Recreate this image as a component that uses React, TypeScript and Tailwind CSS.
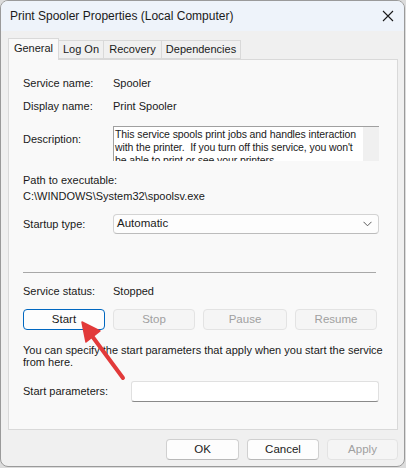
import React from 'react';

const labelCls = 'w-[90px] shrink-0';

function Btn({ children, primary, disabled, w }: { children: React.ReactNode; primary?: boolean; disabled?: boolean; w: string }) {
  const base = 'h-[21px] flex items-center justify-center rounded-[4px] border text-[11.5px] ' + w;
  if (primary) return <div className={base + ' border-[#0067c0] bg-[#fdfdfd] text-[#1a1a1a]'}>{children}</div>;
  if (disabled) return <div className={base + ' border-[#e3e3e3] bg-[#f5f5f5] text-[#a0a0a0]'}>{children}</div>;
  return <div className={base + ' border-[#d0d0d0] border-b-[#b8b8b8] bg-[#fdfdfd] text-[#1a1a1a]'}>{children}</div>;
}

export default function App() {
  return (
    <div className="w-[406px] h-[468px] bg-[#dcdcdc] font-['Liberation_Sans',Arial,sans-serif] text-[11px] text-[#1a1a1a] relative">
      <div className="w-[405px] h-[467px] rounded-[8px] border border-[#9a9a9a] bg-[#f0f0f0] overflow-hidden flex flex-col">
        {/* title bar */}
        <div className="h-[30px] bg-[#eef3fa] flex items-center justify-between pl-[9px] pr-[9px]">
          <span className="text-[12px] text-[#1a1a1a]">Print Spooler Properties (Local Computer)</span>
          <svg width="12" height="12" viewBox="0 0 12 12" className="mr-[1px]">
            <path d="M1 1L11 11M11 1L1 11" stroke="#1a1a1a" strokeWidth="1.1" fill="none" />
          </svg>
        </div>

        <div className="px-[7px] pt-[6px]">
          {/* tabs */}
          <div className="flex items-end h-[22px] text-[11px]">
            <div className="h-[22px] w-[51px] border border-b-0 border-[#d9d9d9] bg-[#f9f9f9] flex items-center justify-center relative top-[1px] z-10 pb-[2px]">General</div>
            <div className="h-[19px] w-[45px] border border-l-0 border-[#d9d9d9] bg-[#f0f0f0] flex items-center justify-center">Log On</div>
            <div className="h-[19px] w-[58px] border border-l-0 border-[#d9d9d9] bg-[#f0f0f0] flex items-center justify-center">Recovery</div>
            <div className="h-[19px] w-[79px] border border-l-0 border-[#d9d9d9] bg-[#f0f0f0] flex items-center justify-center">Dependencies</div>
          </div>

          {/* panel */}
          <div className="h-[371px] w-[390px] border border-[#d9d9d9] bg-[#f9f9f9] pl-[14px]">
            <div className="flex items-center h-[14px] mt-[16px]">
              <span className={labelCls}>Service name:</span>
              <span>Spooler</span>
            </div>
            <div className="flex items-center h-[14px] mt-[9px]">
              <span className={labelCls}>Display name:</span>
              <span>Print Spooler</span>
            </div>
            <div className="flex items-start mt-[13px]">
              <span className={labelCls + ' pt-[5px]'}>Description:</span>
              <div className="w-[266px] h-[35px] border-t border-l border-[#a0a0a0] bg-white flex overflow-hidden">
                <div className="flex-1 pl-[1px] leading-[13px] text-[10.5px] tracking-[-0.1px] pt-[1px]">
                  This service spools print jobs and handles interaction with the printer.&nbsp; If you turn off this service, you won't be able to print or see your printers.
                </div>
                <div className="w-[16px] bg-[#f0f0f0]" />
              </div>
            </div>
            <div className="mt-[11px] leading-[16px]">Path to executable:</div>
            <div className="leading-[16px]">C:\WINDOWS\System32\spoolsv.exe</div>
            <div className="flex items-center mt-[10px]">
              <span className={labelCls}>Startup type:</span>
              <div className="w-[266px] h-[20px] rounded-[4px] border border-[#d3d3d3] border-b-[#bcbcbc] bg-[#fdfdfd] flex items-center justify-between pl-[3px] pr-[6px] text-[11.5px]">
                <span>Automatic</span>
                <svg width="9" height="6" viewBox="0 0 9 6">
                  <path d="M0.5 0.8L4.5 4.8L8.5 0.8" stroke="#5a5a5a" strokeWidth="1" fill="none" />
                </svg>
              </div>
            </div>
            <div className="mt-[38px] h-[1px] w-[353px] bg-[#a8a8a8]" />
            <div className="flex items-center h-[14px] mt-[11px]">
              <span className={labelCls}>Service status:</span>
              <span>Stopped</span>
            </div>
            <div className="flex items-center gap-[8px] mt-[11px]">
              <Btn primary w="w-[82px]">Start</Btn>
              <Btn disabled w="w-[82px]">Stop</Btn>
              <Btn disabled w="w-[84px]">Pause</Btn>
              <Btn disabled w="w-[82px]">Resume</Btn>
            </div>
            <div className="mt-[14px] leading-[12px] w-[360px]">
              You can specify the start parameters that apply when you start the service from here.
            </div>
            <div className="flex items-center mt-[13px]">
              <span className="w-[108px] shrink-0">Start parameters:</span>
              <div className="w-[248px] h-[21px] bg-white border border-[#e0e0e0] border-b-[#8a8a8a] rounded-[3px]" />
            </div>
          </div>

          {/* footer buttons */}
          <div className="flex justify-end gap-[8px] mt-[9px] w-[390px]">
            <Btn w="w-[73px]">OK</Btn>
            <Btn w="w-[72px]">Cancel</Btn>
            <Btn disabled w="w-[71px]">Apply</Btn>
          </div>
        </div>
      </div>

      {/* red annotation arrow */}
      <svg className="absolute left-0 top-0 pointer-events-none" width="406" height="468" viewBox="0 0 406 468">
        <line x1="92" y1="336" x2="123" y2="378" stroke="#e23a3a" strokeWidth="4" strokeLinecap="round" />
        <polygon points="82,322 86,342 100,331" fill="#e23a3a" stroke="#e23a3a" strokeWidth="1.5" strokeLinejoin="round" />
      </svg>
    </div>
  );
}
